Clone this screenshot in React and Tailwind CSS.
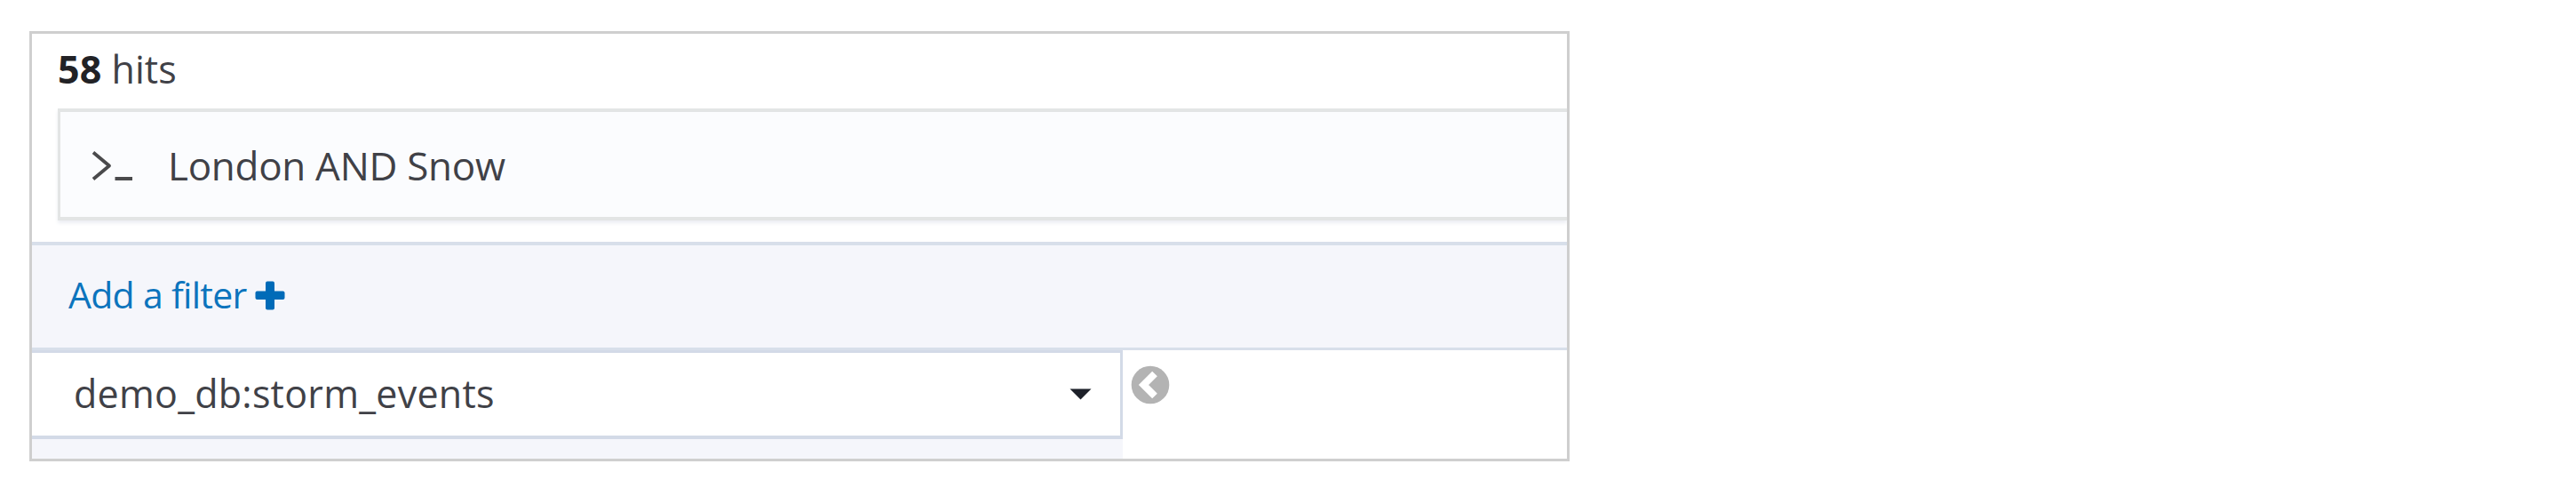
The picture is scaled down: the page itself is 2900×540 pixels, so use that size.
function PromptIcon() {
  return (
    <svg className="mt-[43px] h-[36px] w-[48px] shrink-0" viewBox="0 0 48 36" fill="none" stroke="#4a4a4c">
      <path d="M2 2.5 L20 17.5 L2 32.5" strokeWidth="3.8" strokeLinejoin="round" />
      <path d="M26.5 32 H46" strokeWidth="4" />
    </svg>
  );
}

function PlusIcon() {
  return (
    <svg className="mt-[40px] ml-[9px] h-[33px] w-[34px] shrink-0" viewBox="0 0 34 33" fill="#006bb8">
      <rect x="12" y="0.5" width="10" height="32" rx="2" />
      <rect x="0.5" y="11.5" width="33" height="9.5" rx="2" />
    </svg>
  );
}

function CollapseIcon() {
  return (
    <svg className="mt-[17px] ml-[9px] h-[44px] w-[44px]" viewBox="0 0 44 44">
      <circle cx="22" cy="22" r="21.3" fill="#b3b3b3" />
      <path d="M27 9.5 L14.5 22 L27 34.5" fill="none" stroke="#fff" strokeWidth="8" />
    </svg>
  );
}

export default function App() {
  return (
    <div className="h-[540px] w-[2900px] overflow-hidden bg-white pt-[35px] pl-[33px] font-['Open_Sans',sans-serif]">
      <main className="flex h-[484px] w-[1734px] flex-col overflow-hidden border-3 border-[#cfcfcf] bg-white">
        <p className="h-[84px] shrink-0 pl-[29px] text-[43px] leading-[79px] tracking-[0.05px] whitespace-pre text-[#404147]">
          <b className="font-bold text-[#222226]">58</b> hits
        </p>
        <div className="ml-[29px] flex h-[126px] shrink-0 border-y-4 border-l-3 border-[#e3e5e5] bg-[#fbfcfe] pl-[35px] shadow-[0_3px_4px_#eceef3]">
          <PromptIcon />
          <span className="ml-[38px] text-[44px] leading-[121px] tracking-[-0.3px] whitespace-nowrap text-[#404147]">London AND Snow</span>
        </div>
        <div className="mt-6 flex h-[122px] shrink-0 border-t-4 border-b-3 border-[#d8dfea] bg-[#f5f6fb] pl-[41px]">
          <a className="text-[41px] leading-[111px] tracking-[-0.7px] whitespace-nowrap text-[#0c74bd]">Add a filter</a>
          <PlusIcon />
        </div>
        <div className="flex min-h-0 flex-1">
          <aside className="h-full w-[1228px] shrink-0 bg-[#f5f6fb]">
            <div className="flex h-[100px] border-t-3 border-r-3 border-b-4 border-[#d3dae7] bg-white pl-[47px]">
              <span className="text-[43px] leading-[91px] tracking-[0.25px] whitespace-nowrap text-[#404147]">demo_db:storm_events</span>
              <svg className="mt-[40px] mr-[32px] ml-auto h-[13px] w-[25px]" viewBox="0 0 25 13" fill="#1d2029">
                <path d="M0.5 0.5 H24.5 L12.5 12.5 Z" />
              </svg>
            </div>
          </aside>
          <CollapseIcon />
        </div>
      </main>
    </div>
  );
}
